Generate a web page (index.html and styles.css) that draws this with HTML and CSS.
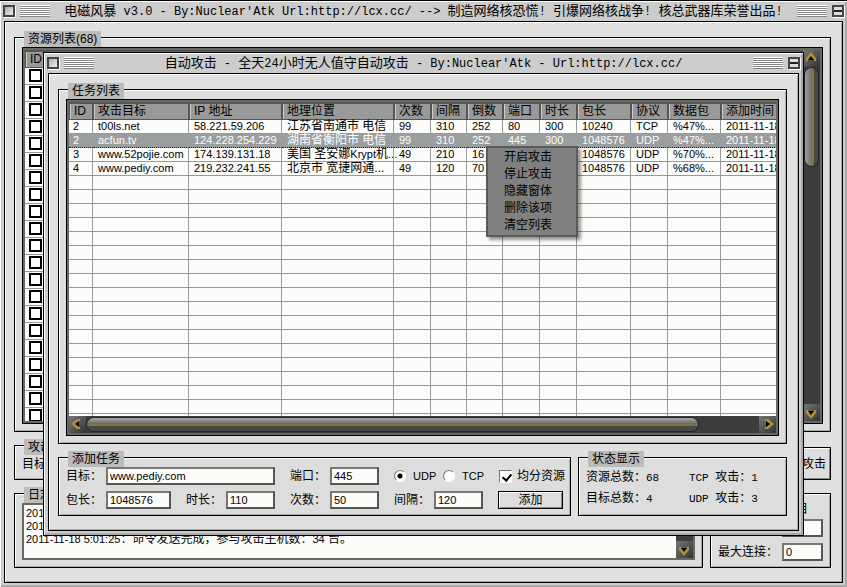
FILE: index.html
```html
<!DOCTYPE html>
<html lang="zh-CN">
<head>
<meta charset="utf-8">
<title>电磁风暴 v3.0</title>
<link rel="stylesheet" href="styles.css">
</head>
<body>
<main class="window main-window">
  <header class="titlebar">
    <button class="sysbox" type="button" aria-label="关闭"></button>
    <span class="grip"></span>
    <h1 class="title">电磁风暴<span class="mono"> v3.0 - By:Nuclear'Atk Url:http://lcx.cc/ --&gt; </span>制造网络核恐慌<span class="mono">! </span>引爆网络核战争<span class="mono">! </span>核总武器库荣誉出品<span class="mono">!</span></h1>
    <span class="grip"></span>
    <button class="sysbox shade" type="button" aria-label="最小化"></button>
  </header>
  <div class="panel">
    <section class="group grow">
      <h2 class="legend">资源列表(68)</h2>
      <div class="listbox">
        <div class="viewport">
          <table class="grid resources">
            <colgroup><col class="w-check"><col class="w-56"><col class="w-36"><col class="w-36"><col class="w-96"><col></colgroup>
            <thead><tr><th>ID</th><th></th><th></th><th></th><th></th><th></th></tr></thead>
            <tbody data-fill="22" data-cols="6" data-checks="true"></tbody>
          </table>
        </div>
        <div class="scroll vertical">
          <span class="arrow"><svg viewBox="0 0 17 17"><path class="gold" d="M8 2 13 8V11H11L10 9H6L5 11H3V8z"/><path class="ink" d="M8 6 11 10H5z"/></svg></span>
          <span class="track"><span class="thumb"></span></span>
          <span class="arrow"><svg viewBox="0 0 17 17"><path class="gold" d="M8 15 13 9V6H11L10 8H6L5 6H3V9z"/><path class="ink" d="M8 11 11 7H5z"/></svg></span>
        </div>
      </div>
    </section>
    <div class="row">
      <section class="group attack">
        <h2 class="legend">攻击</h2>
        <div class="line">目标：</div>
      </section>
      <button class="push big" type="button">攻击</button>
    </div>
    <div class="row">
      <section class="group log-group">
        <h2 class="legend">日志</h2>
        <div class="log">
          <div class="log-text" role="log">
            <p class="latin">2011-11-18 5:01:25</p>
            <p class="latin">2011-11-18 5:01:25</p>
            <p><span class="latin">2011-11-18 5:01:25</span>：命令发送完成，参与攻击主机数：<span class="latin">34</span> 台。</p>
          </div>
          <div class="scroll vertical">
            <span class="track"></span>
            <span class="arrow"><svg viewBox="0 0 17 17"><path class="gold" d="M8 15 13 9V6H11L10 8H6L5 6H3V9z"/><path class="ink" d="M8 11 11 7H5z"/></svg></span>
          </div>
        </div>
      </section>
      <section class="group limits">
        <div class="flag">目</div>
        <div class="field end"><input class="text w-41" aria-label="连接"></div>
        <div class="field end"><label for="max">最大连接：</label><input class="text w-41" id="max" value="0"></div>
      </section>
    </div>
  </div>
</main>

<div class="window dialog" role="dialog" aria-labelledby="dlg">
  <header class="titlebar">
    <button class="sysbox" type="button" aria-label="关闭"></button>
    <span class="grip"></span>
    <h1 class="title" id="dlg">自动攻击<span class="mono"> - </span>全天<span class="mono">24</span>小时无人值守自动攻击<span class="mono"> - By:Nuclear'Atk - Url:http://lcx.cc/</span></h1>
    <span class="grip"></span>
    <button class="sysbox shade" type="button" aria-label="最小化"></button>
  </header>
  <div class="panel">
    <section class="group grow">
      <h2 class="legend">任务列表</h2>
      <div class="listbox stacked">
        <div class="viewport">
          <table class="grid tasks">
            <colgroup><col class="w-24"><col class="w-96"><col class="w-93"><col class="w-112"><col class="w-37"><col class="w-36"><col class="w-36"><col class="w-37"><col class="w-37"><col class="w-54"><col class="w-37"><col class="w-53"><col></colgroup>
            <thead><tr><th>ID</th><th>攻击目标</th><th>IP 地址</th><th>地理位置</th><th>次数</th><th>间隔</th><th>倒数</th><th>端口</th><th>时长</th><th>包长</th><th>协议</th><th>数据包</th><th>添加时间</th></tr></thead>
            <tbody data-fill="18" data-cols="13">
              <tr><td>2</td><td>t00ls.net</td><td>58.221.59.206</td><td class="han">江苏省南通市 电信</td><td>99</td><td>310</td><td>252</td><td>80</td><td>300</td><td>10240</td><td>TCP</td><td>%47%...</td><td>2011-11-18</td></tr>
              <tr class="selected"><td>2</td><td>acfun.tv</td><td>124.228.254.229</td><td class="han">湖南省衡阳市 电信</td><td>99</td><td>310</td><td>252</td><td>445</td><td>300</td><td>1048576</td><td>UDP</td><td>%47%...</td><td>2011-11-18</td></tr>
              <tr><td>3</td><td>www.52pojie.com</td><td>174.139.131.18</td><td class="han">美国 圣安娜<span class="latin">Krypt</span>机<span class="latin">...</span></td><td>49</td><td>210</td><td>16</td><td></td><td></td><td>1048576</td><td>UDP</td><td>%70%...</td><td>2011-11-18</td></tr>
              <tr><td>4</td><td>www.pediy.com</td><td>219.232.241.55</td><td class="han">北京市 宽捷网通...</td><td>49</td><td>120</td><td>70</td><td></td><td></td><td>1048576</td><td>UDP</td><td>%68%...</td><td>2011-11-18</td></tr>
            </tbody>
          </table>
        </div>
        <div class="scroll horizontal">
          <span class="arrow"><svg viewBox="0 0 17 17"><path class="gold" d="M2 8 8 3H11V5L9 6V10L11 11V13H8z"/><path class="ink" d="M6 8 10 5V11z"/></svg></span>
          <span class="track"><span class="thumb"></span></span>
          <span class="arrow"><svg viewBox="0 0 17 17"><path class="gold" d="M15 8 9 3H6V5L8 6V10L6 11V13H9z"/><path class="ink" d="M11 8 7 5V11z"/></svg></span>
        </div>
      </div>
    </section>
    <div class="row tight">
      <form class="group add">
        <h2 class="legend">添加任务</h2>
        <div class="fields">
          <div class="field"><label for="target">目标：</label><input class="text w-169" id="target" value="www.pediy.com"></div>
          <div class="field"><label for="port">端口：</label><input class="text w-49" id="port" value="445"></div>
          <div class="field choices">
            <input type="radio" class="radio" name="proto" id="udp" checked><label class="latin" for="udp">UDP</label>
            <input type="radio" class="radio" name="proto" id="tcp"><label class="latin" for="tcp">TCP</label>
          </div>
          <div class="field"><input type="checkbox" class="check" id="share" checked><label for="share">均分资源</label></div>
        </div>
        <div class="fields">
          <div class="field"><label for="size">包长：</label><input class="text w-65" id="size" value="1048576"></div>
          <div class="field"><label for="span">时长：</label><input class="text w-49" id="span" value="110"></div>
          <div class="field"><label for="count">次数：</label><input class="text w-49" id="count" value="50"></div>
          <div class="field"><label for="gap">间隔：</label><input class="text w-49" id="gap" value="120"></div>
          <button class="push w-65" type="button">添加</button>
        </div>
      </form>
      <section class="group status">
        <h2 class="legend">状态显示</h2>
        <div class="stats">
          <span>资源总数：<span class="mono">68</span></span><span><span class="mono">TCP </span>攻击：<span class="mono">1</span></span>
          <span>目标总数：<span class="mono">4</span></span><span><span class="mono">UDP </span>攻击：<span class="mono">3</span></span>
        </div>
      </section>
    </div>
  </div>
  <menu class="menu">
    <li><button type="button">开启攻击</button></li>
    <li><button type="button">停止攻击</button></li>
    <li><button type="button">隐藏窗体</button></li>
    <li><button type="button">删除该项</button></li>
    <li><button type="button">清空列表</button></li>
  </menu>
</div>
<script src="app.js"></script>
</body>
</html>
```
FILE: styles.css
```css
* { box-sizing: border-box; margin: 0; padding: 0; }
body {
  font: 12px/16px "Liberation Sans", "Noto Sans CJK SC", sans-serif;
  color: #000;
  background: #ccc;
}
button, input { font: inherit; color: inherit; }
h1, h2, th { font-weight: normal; }
.latin { font-size: 11px; }
.mono { font-family: "Liberation Mono", monospace; white-space: pre; }

/* Windows */
.window {
  display: flex;
  flex-direction: column;
  background: #ccc;
  border-top: 1px solid #000;
}
.main-window { height: 100vh; box-shadow: inset 1px 1px #fff, inset -2px -2px #aaa; }
.dialog {
  position: absolute;
  inset: 52px 43px 51px;
  border: 1px solid #000;
  box-shadow: inset 1px 1px #fff, inset -2px -2px #aaa9ac;
}
.titlebar { display: flex; align-items: center; flex: none; height: 20px; padding: 0 3px; gap: 5px; }
.title { flex: 1; text-align: center; font-size: 13px; line-height: 19px; white-space: nowrap; overflow: hidden; }
.title .mono { font-size: 12px; }
.grip {
  width: 30px;
  height: 12px;
  background: repeating-linear-gradient(#fff 0 1px, #888 1px 2px);
}
.sysbox {
  width: 12px;
  height: 12px;
  border: 2px solid #444;
  background: linear-gradient(135deg, #aaa, #eee);
  box-shadow: 1px 1px #fff;
}
.shade { background: linear-gradient(#ddd 0 3px, #222 3px 5px, #ddd 5px); }
.panel {
  flex: 1;
  min-height: 0;
  display: flex;
  flex-direction: column;
  gap: 13px;
  margin: 0 4px 4px;
  padding: 15px 11px 14px 9px;
  border: 1px solid #000;
  background: #e0e0e0;
  box-shadow: inset 1px 1px #fff, inset -1px -1px #aaa;
}
.row { display: flex; gap: 7px; flex: none; align-items: stretch; }

/* Titled groups */
.group {
  display: flex;
  flex-direction: column;
  min-width: 0;
  padding: 0 7px 7px;
  border: 1px solid #000;
  background: #ddd;
  box-shadow: inset 1px 1px #fff, inset -1px -1px #aaa;
}
.grow { flex: 1; min-height: 0; }
.legend {
  flex: none;
  align-self: flex-start;
  height: 16px;
  margin: -7px 0 0 2px;
  padding: 0 4px;
  background: #bbb;
  font-size: 12px;
  line-height: 16px;
}

/* Lists */
.listbox {
  flex: 1;
  min-height: 0;
  display: flex;
  padding: 2px;
  border: 1px solid #000;
  background: #666864;
}
.stacked { flex-direction: column; }
.viewport { flex: 1; min-width: 0; min-height: 0; overflow: hidden; background: #fcfcfa; }
.grid { width: 100%; table-layout: fixed; border-collapse: separate; border-spacing: 0; }
.tasks { min-width: 732px; }
.grid th {
  height: 18px;
  padding: 0 0 0 4px;
  border: 1px solid #555;
  border-width: 2px 1px 1px;
  background: #999;
  box-shadow: inset 1px 0 #ccc;
  line-height: 15px;
  text-align: left;
  white-space: nowrap;
}
.grid td {
  height: 14px;
  padding: 0 0 0 5px;
  border-right: 1px solid #999;
  border-bottom: 1px solid #999;
  font-size: 11px;
  line-height: 13px;
  white-space: nowrap;
}
.grid td:first-child { padding-left: 4px; }
.grid .han { font-size: 12px; }
.selected { background: #9a9e9e; color: #fff; }
.grid .selected td { border-right-color: #9a9e9e; border-bottom: 1px dotted #222; }
.resources td { height: 17px; padding-top: 1px; line-height: 0; vertical-align: top; }
.rowcheck {
  appearance: none;
  width: 13px;
  height: 13px;
  border: 2px solid #000;
  background: #fff;
  vertical-align: top;
}
.w-check { width: 45px; }
.w-24 { width: 24px; }
.w-36 { width: 36px; }
.w-37 { width: 37px; }
.w-53 { width: 53px; }
.w-54 { width: 54px; }
.w-56 { width: 56px; }
.w-93 { width: 93px; }
.w-96 { width: 96px; }
.w-112 { width: 112px; }

/* Scroll bars */
.scroll { display: flex; flex: none; background: #3c3c3c; }
.vertical { width: 17px; flex-direction: column; }
.horizontal { height: 17px; }
.arrow { flex: none; width: 17px; height: 17px; background: linear-gradient(135deg, #777, #333); }
.arrow svg { display: block; width: 17px; height: 17px; }
.gold { fill: #b08f3a; }
.ink { fill: #000; }
.track { flex: 1; display: flex; padding: 1px 2px; }
.thumb { border-radius: 7px; box-shadow: 0 0 0 1px #222; }
.vertical .thumb {
  flex: none;
  width: 13px;
  height: 98px;
  background: linear-gradient(90deg, #999, #777 6px, #847434 6px 9px, #484848 9px);
}
.horizontal .track { padding: 2px 1px; }
.horizontal .thumb {
  width: 91%;
  height: 13px;
  background: linear-gradient(#aaa, #666 6px, #847434 6px 8px, #484848 8px);
}

/* Main window controls */
.attack { flex: 1; height: 35px; }
.line { line-height: 18px; white-space: nowrap; }
.push {
  border: 1px solid #000;
  background: #ddd;
  box-shadow: inset 1px 1px #fff, inset -1px -1px #888;
  line-height: 14px;
}
.big { width: 100px; margin-top: 2px; padding-right: 4px; text-align: right; }
.log-group { flex: 1; height: 75px; }
.log { flex: 1; min-height: 0; display: flex; border: 2px solid #666864; background: #fcfcfa; }
.log-text { flex: 1; min-width: 0; padding: 2px; overflow: hidden; line-height: 13px; white-space: nowrap; }
.log-text p { height: 13px; }
.limits { width: 121px; gap: 6px; padding-top: 9px; padding-bottom: 6px; }
.flag { height: 10px; padding-right: 15px; line-height: 12px; text-align: right; }

/* Form parts */
.field { display: flex; align-items: center; height: 18px; white-space: nowrap; }
.end { justify-content: flex-end; }
.end label { flex: 1; }
.text {
  height: 18px;
  padding: 0 2px;
  border: 2px solid #55564f;
  border-top-color: #777870;
  border-left-color: #777870;
  border-radius: 0;
  background: #fcfcfa;
  font-size: 11px;
  line-height: 14px;
  outline: 0;
}
.w-41 { width: 41px; }
.w-49 { width: 49px; }
.w-65 { width: 65px; }
.w-169 { width: 169px; }
.add { flex: 513 1 513px; padding-right: 0; padding-bottom: 6px; gap: 6px; }
.add .legend { margin-bottom: -6px; }
.fields { display: flex; gap: 15px; }
.add .field > label:first-child { width: 40px; }
.choices { width: 90px; gap: 7px; }
.add .choices .latin { width: 23px; }
.radio {
  appearance: none;
  flex: none;
  width: 12px;
  height: 12px;
  border: 1px solid #777;
  border-right-color: #fff;
  border-bottom-color: #fff;
  border-radius: 6px;
  background: #fcfcfa;
}
.radio:checked { background: radial-gradient(circle, #000 2px, #fcfcfa 3px); }
.check {
  appearance: none;
  flex: none;
  width: 13px;
  height: 13px;
  margin-right: 5px;
  border: 1px solid #777;
  border-right-color: #fff;
  border-bottom-color: #fff;
  background: #fcfcfa;
  position: relative;
}
.check:checked::after {
  content: "";
  position: absolute;
  left: 4px;
  top: 1px;
  width: 4px;
  height: 7px;
  border: solid #000;
  border-width: 0 2px 2px 0;
  transform: rotate(40deg);
}
.status { flex: 209 1 209px; padding-bottom: 6px; }
.stats {
  display: grid;
  grid-template-columns: 8fr 7fr;
  grid-auto-rows: 21px;
  line-height: 21px;
  white-space: nowrap;
}
.stats .mono { font-size: 11px; line-height: 16px; }

/* Context menu */
.menu {
  position: absolute;
  left: 442px;
  top: 93px;
  width: 92px;
  padding: 1px 0;
  border: 2px solid #5a5b56;
  background: #808080;
  box-shadow: 3px 3px 3px #0006;
  list-style: none;
}
.menu button {
  display: block;
  width: 100%;
  height: 17px;
  padding-left: 16px;
  border: 0;
  background: none;
  line-height: 17px;
  text-align: left;
}
```
FILE: app.js
```js
// Fills each list body with empty rows down to the bottom of its view.
document.querySelectorAll("tbody[data-fill]").forEach(function (body) {
  for (let r = 0; r < Number(body.dataset.fill); r++) {
    const row = body.insertRow();
    for (let c = 0; c < Number(body.dataset.cols); c++) {
      const cell = row.insertCell();
      if (c === 0 && body.dataset.checks) {
        const box = document.createElement("input");
        box.type = "checkbox";
        box.className = "rowcheck";
        box.setAttribute("aria-label", "选择 " + (r + 1));
        cell.appendChild(box);
      }
    }
  }
});
```
